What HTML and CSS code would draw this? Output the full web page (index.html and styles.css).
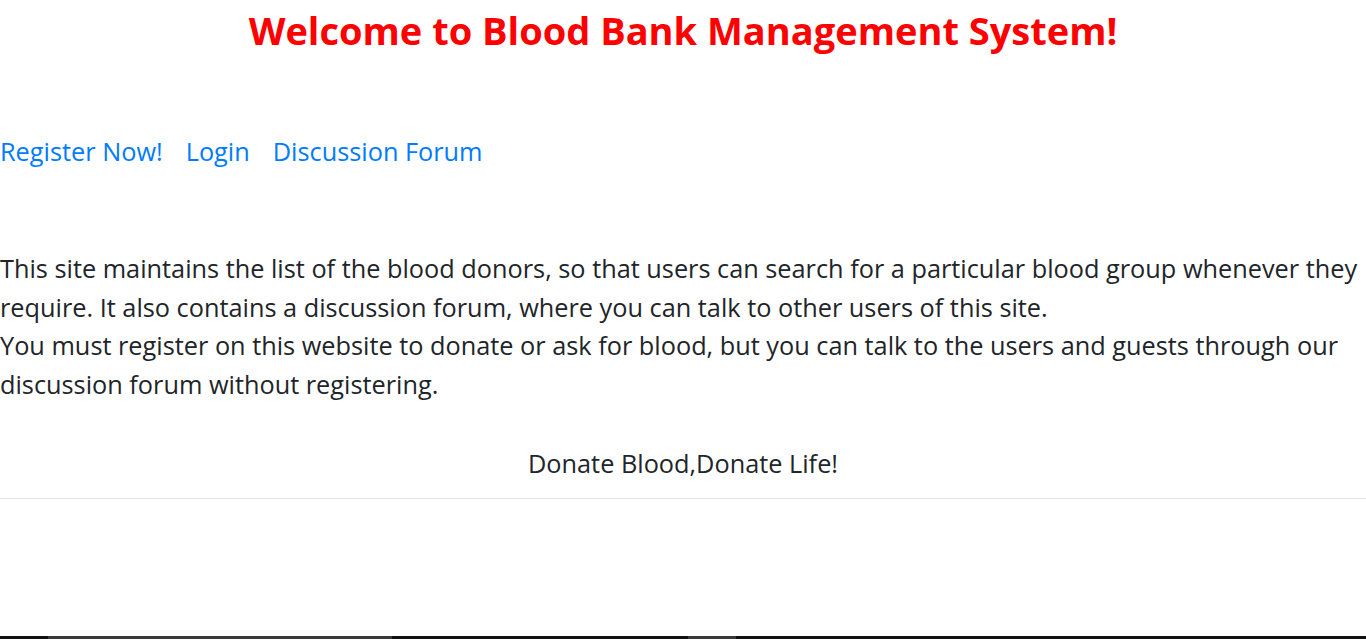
FILE: index.html
```html
<!DOCTYPE html>
<html lang="en">
<head>
<meta charset="utf-8">
<title>Blood Bank Management System</title>
<link rel="stylesheet" href="styles.css">
</head>
<body>
<main class="page">
  <h1 class="title">Welcome to Blood Bank Management System!</h1>
  <nav class="nav">
    <a href="#" class="nav-link">Register Now!</a>
    <a href="#" class="nav-link">Login</a>
    <a href="#" class="nav-link">Discussion Forum</a>
  </nav>
  <p class="intro">This site maintains the list of the blood donors, so that users can search for a particular blood group whenever they require. It also contains a discussion forum, where you can talk to other users of this site.<br>You must register on this website to donate or ask for blood, but you can talk to the users and guests through our discussion forum without registering.</p>
  <p class="motto">Donate Blood,Donate Life!</p>
  <hr class="rule">
</main>
<div class="taskbar">
  <span class="tb-seg tb-dark1"></span>
  <span class="tb-seg tb-grey1"></span>
  <span class="tb-seg tb-dark2"></span>
  <span class="tb-seg tb-grey2"></span>
  <span class="tb-seg tb-dark3"></span>
</div>
</body>
</html>
```
FILE: styles.css
```css
html, body {
  margin: 0;
  padding: 0;
  background: #fff;
}
body {
  min-height: 100vh;
  display: flex;
  flex-direction: column;
  font-family: "Open Sans", "Noto Sans", "Liberation Sans", sans-serif;
  color: #212529;
}
.page {
  flex: 1;
}
.title {
  margin: 8px 0 0;
  text-align: center;
  color: #ff0000;
  font-size: 38px;
  line-height: 44px;
  font-weight: 700;
}
.nav {
  display: flex;
  gap: 23px;
  margin-top: 80px;
  font-size: 25.3px;
  line-height: 38.4px;
}
.nav-link {
  color: #007bff;
  text-decoration: none;
}
.intro {
  margin: 79px 0 0;
  font-size: 25.3px;
  line-height: 38.4px;
}
.motto {
  margin: 41.4px 0 0;
  text-align: center;
  font-size: 25.3px;
  line-height: 38.4px;
}
.rule {
  margin: 15.6px 0 0;
  border: 0;
  border-top: 1px solid rgba(0, 0, 0, 0.1);
}
.taskbar {
  display: flex;
  height: 3px;
  background: #111;
}
.tb-seg { display: block; height: 3px; }
.tb-dark1 { width: 48px; background: #111; }
.tb-grey1 { width: 344px; background: #3a3a3a; }
.tb-dark2 { width: 296px; background: #111; }
.tb-grey2 { width: 48px; background: #3a3a3a; }
.tb-dark3 { flex: 1; background: #111; }
```
